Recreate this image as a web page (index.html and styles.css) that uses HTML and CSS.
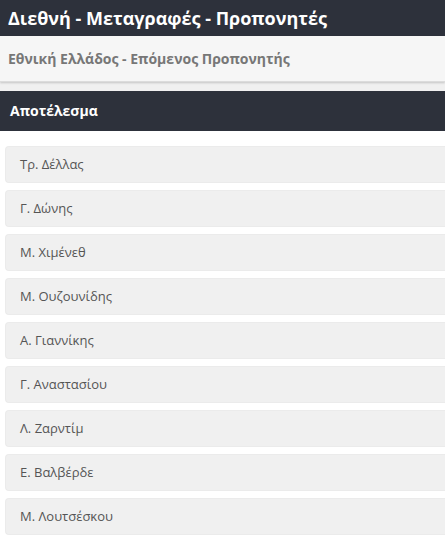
FILE: index.html
```html
<!DOCTYPE html>
<html lang="el">
<head>
    <meta charset="UTF-8">
    <meta name="viewport" content="width=device-width, initial-scale=1.0">
    <title>Προπονητές</title>
    <link rel="stylesheet" href="styles.css">
</head>
<body>
    <div class="top-bar">Διεθνή - Μεταγραφές - Προπονητές</div>

    <div class="sub-wrap">
        <div class="sub-bar">Εθνική Ελλάδος - Επόμενος Προπονητής</div>
    </div>

    <div class="result-head">Αποτέλεσμα</div>

    <div class="options">
        <div class="option">Τρ. Δέλλας</div>
        <div class="option">Γ. Δώνης</div>
        <div class="option">Μ. Χιμένεθ</div>
        <div class="option">Μ. Ουζουνίδης</div>
        <div class="option">Α. Γιαννίκης</div>
        <div class="option">Γ. Αναστασίου</div>
        <div class="option">Λ. Ζαρντίμ</div>
        <div class="option">Ε. Βαλβέρδε</div>
        <div class="option">Μ. Λουτσέσκου</div>
    </div>
</body>
</html>
```

FILE: styles.css
```css
body {
    font-family: "Open Sans", sans-serif;
    background: #fff;
    margin: 0;
    padding: 0;
    overflow: hidden;
}

.top-bar {
    background: #2d313b;
    color: #fff;
    font-size: 18px;
    font-weight: bold;
    height: 36px;
    line-height: 36px;
    padding: 0 8px;
}

.sub-wrap {
    background: #f0f0f0;
    padding-bottom: 9px;
}

.sub-bar {
    background: #f6f6f6;
    color: #777;
    font-size: 14px;
    font-weight: bold;
    height: 45px;
    line-height: 45px;
    padding: 0 8px;
    border-bottom: 1px solid #dcdcdc;
    box-shadow: 0 1px 2px rgba(0, 0, 0, 0.18);
}

.result-head {
    background: #2d313b;
    color: #fff;
    font-size: 14px;
    font-weight: bold;
    height: 40px;
    line-height: 40px;
    padding: 0 10px;
}

.options {
    display: flex;
    flex-direction: column;
    gap: 7px;
    padding: 15px 0 0 5px;
}

.option {
    background: #f0f0f0;
    border: 1px solid #ebebeb;
    border-right: none;
    border-radius: 4px 0 0 4px;
    height: 35px;
    line-height: 35px;
    padding: 0 14px;
    color: #555;
    font-size: 13px;
}
```
